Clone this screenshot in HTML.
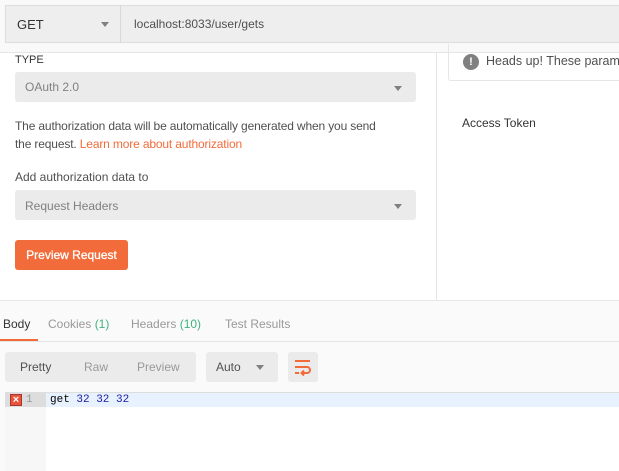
<!DOCTYPE html>
<html><head><meta charset="utf-8"><style>
*{margin:0;padding:0;box-sizing:border-box}
body{width:619px;height:471px;overflow:hidden;background:#fff;font-family:"Liberation Sans",sans-serif;font-size:12px;color:#505050;position:relative}
.abs{position:absolute}
.caret{position:absolute;width:0;height:0;border-left:4px solid transparent;border-right:4px solid transparent;border-top:5px solid #808080}
</style></head><body>
<div class="abs" style="left:0;top:0;width:619px;height:53px;background:#f9f9f9;border-bottom:1px solid #e6e6e6"></div>
<div class="abs" style="left:5px;top:5px;width:116px;height:38px;background:#eee;border:1px solid #ddd;border-right:1px solid #d8d8d8"></div>
<div class="abs" style="left:17px;top:17px;font-size:13px;color:#333">GET</div>
<div class="caret" style="left:101px;top:22px"></div>
<div class="abs" style="left:121px;top:5px;width:498px;height:38px;background:#eee;border-top:1px solid #ddd;border-bottom:1px solid #ddd"></div>
<div class="abs" style="left:134px;top:17px;font-size:12px;color:#505050">localhost:8033/user/gets</div>

<div class="abs" style="left:15px;top:54px;font-size:11px;color:#333">TYPE</div>
<div class="abs" style="left:15px;top:72px;width:401px;height:30px;background:#ebebeb;border-radius:3px"></div>
<div class="abs" style="left:25px;top:80px;color:#808080">OAuth 2.0</div>
<div class="caret" style="left:394px;top:86px"></div>
<div class="abs" style="left:15px;top:117px;width:410px;line-height:18px;color:#505050;font-size:12px;letter-spacing:-0.15px;white-space:nowrap">The authorization data will be automatically generated when you send<br>the request. <span style="color:#f26b3a">Learn more about authorization</span></div>
<div class="abs" style="left:15px;top:170px;color:#505050">Add authorization data to</div>
<div class="abs" style="left:15px;top:190px;width:401px;height:30px;background:#ebebeb;border-radius:3px"></div>
<div class="abs" style="left:25px;top:199px;color:#808080">Request Headers</div>
<div class="caret" style="left:394px;top:204px"></div>
<div class="abs" style="left:15px;top:240px;width:113px;height:30px;background:#f26b3a;border-radius:3px;color:#fff;font-size:12px;line-height:30px;text-align:center;-webkit-text-stroke:0.3px #fff">Preview Request</div>

<div class="abs" style="left:436px;top:53px;width:1px;height:247px;background:#e6e6e6"></div>
<div class="abs" style="left:448px;top:44px;width:171px;height:37px;border:1px solid #e6e6e6;border-top:none;border-right:none;border-radius:0 0 0 3px;overflow:hidden">
<div class="abs" style="left:14px;top:10px;width:16px;height:16px;border-radius:50%;background:#808080;color:#fff;font-weight:bold;font-size:11px;line-height:16px;text-align:center">!</div>
<div class="abs" style="left:37px;top:10px;font-size:12.5px;color:#505050;white-space:nowrap">Heads up! These parameters</div>
</div>
<div class="abs" style="left:462px;top:116px;color:#333">Access Token</div>

<div class="abs" style="left:0;top:300px;width:619px;height:171px;background:#fafafa;border-top:1px solid #e6e6e6"></div>
<div class="abs" style="left:0;top:341px;width:619px;height:1px;background:#e6e6e6"></div>
<div class="abs" style="left:3px;top:317px;color:#333">Body</div>
<div class="abs" style="left:0;top:339px;width:38px;height:2px;background:#f26b3a"></div>
<div class="abs" style="left:48px;top:317px;color:#999">Cookies <span style="color:#3fb37f">(1)</span></div>
<div class="abs" style="left:131px;top:317px;color:#999">Headers <span style="color:#3fb37f">(10)</span></div>
<div class="abs" style="left:225px;top:317px;color:#999">Test Results</div>

<div class="abs" style="left:5px;top:352px;width:191px;height:30px;background:#ebebeb;border-radius:3px"></div>
<div class="abs" style="left:20px;top:360px;color:#505050">Pretty</div>
<div class="abs" style="left:84px;top:360px;color:#999">Raw</div>
<div class="abs" style="left:137px;top:360px;color:#999">Preview</div>
<div class="abs" style="left:206px;top:352px;width:72px;height:30px;background:#ebebeb;border-radius:3px"></div>
<div class="abs" style="left:216px;top:360px;color:#505050">Auto</div>
<div class="caret" style="left:256px;top:365px"></div>
<div class="abs" style="left:288px;top:352px;width:30px;height:30px;background:#ebebeb;border-radius:3px"></div>
<svg class="abs" style="left:293px;top:357px" width="20" height="20" viewBox="0 0 20 20"><g stroke="#f26b3a" stroke-width="2" fill="none"><path d="M2 4h15M2 10h12a3 3 0 0 1 0 6h-5M2 16h4"/><path d="M11 13.5l-2.5 2.5 2.5 2.5"/></g></svg>

<div class="abs" style="left:5px;top:392px;width:614px;height:79px;background:#fff;border-top:1px solid #ddd"></div>
<div class="abs" style="left:5px;top:393px;width:41px;height:78px;background:#f7f7f7"></div>
<div class="abs" style="left:5px;top:393px;width:41px;height:14px;background:#ddd"></div>
<div class="abs" style="left:46px;top:393px;width:573px;height:14px;background:#e8f2ff"></div>
<div class="abs" style="left:10px;top:394px;width:12px;height:12px;background:#e8533a;border:1px solid #a33;color:#fff;font-size:11px;line-height:10px;text-align:center;font-weight:bold">×</div>
<div class="abs" style="left:26px;top:394px;font-family:'Liberation Mono',monospace;font-size:11px;color:#999">1</div>
<div class="abs" style="left:50px;top:394px;font-family:'Liberation Mono',monospace;font-size:11px;color:#000">get <span style="color:#1a1aa6">32 32 32</span></div>
</body></html>
